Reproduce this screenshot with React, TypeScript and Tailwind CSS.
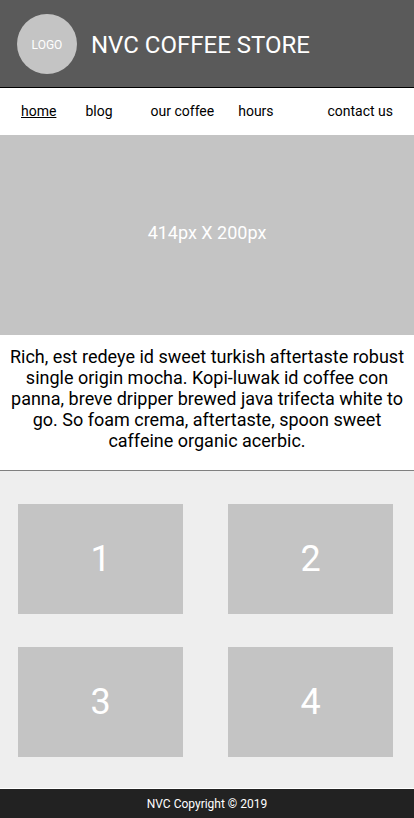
const links = [
  { label: 'home', place: 'ml-[21px]' },
  { label: 'blog', place: 'ml-[29px]' },
  { label: 'our coffee', place: 'ml-[38px]' },
  { label: 'hours', place: 'ml-6' },
  { label: 'contact us', place: 'ml-auto mr-[21px]' },
];

export default function App() {
  return (
    <div className="flex min-h-screen flex-col bg-white font-[Roboto,sans-serif] text-black">
      <header className="flex h-[88px] items-center gap-3.5 border-b border-black bg-[#5a5a5a] px-[17px] text-white">
        <div className="flex size-[60px] items-center justify-center rounded-full bg-[#c4c4c4] pt-0.5 text-xs">LOGO</div>
        <h1 className="pt-0.5 text-2xl">NVC COFFEE STORE</h1>
      </header>
      <nav className="flex h-[47px] items-center pb-0.5 text-sm">
        {links.map((link, i) => (
          <a key={link.label} href="#" className={`${link.place} ${i === 0 ? 'underline' : ''}`}>
            {link.label}
          </a>
        ))}
      </nav>
      <main className="flex grow flex-col">
        <section className="flex h-[200px] items-center justify-center bg-[#c4c4c4] pb-1 text-lg text-white">
          414px X 200px
        </section>
        <p className="border-b border-[#808080] px-2 pt-[11px] pb-[19px] text-center text-lg leading-[21px]">
          Rich, est redeye id sweet turkish aftertaste robust single origin mocha. Kopi-luwak id coffee con panna,
          breve dripper brewed java trifecta white to go. So foam crema, aftertaste, spoon sweet caffeine organic
          acerbic.
        </p>
        <section className="grid grow grid-cols-2 content-start gap-x-[45px] gap-y-[33px] bg-[#eeeeee] pt-[33px] pr-[21px] pb-[31px] pl-[18px] text-4xl text-white">
          {[1, 2, 3, 4].map((n) => (
            <div key={n} className="flex h-[110px] items-center justify-center bg-[#c4c4c4]">
              {n}
            </div>
          ))}
        </section>
      </main>
      <footer className="flex h-[30px] items-center justify-center border-t border-white bg-[#222222] text-xs text-white">
        NVC Copyright © 2019
      </footer>
    </div>
  );
}
